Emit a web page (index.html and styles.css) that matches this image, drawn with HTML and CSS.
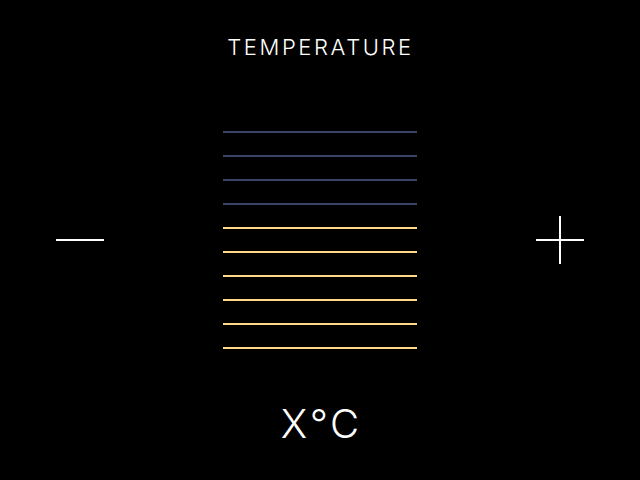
FILE: index.html
```html
<!DOCTYPE html>
<html lang="en">
<head>
  <meta charset="UTF-8" />
  <title>Temperature</title>
  <link rel="stylesheet" href="styles.css">
</head>
<body>
<div class="screen">
  <h1 class="title">TEMPERATURE</h1>

  <div class="control">
    <button class="step" aria-label="Decrease">
      <svg width="48" height="48" viewBox="0 0 48 48"><rect x="0" y="23" width="48" height="2" fill="#fff"/></svg>
    </button>

    <div class="levels">
      <span class="level off"></span>
      <span class="level off"></span>
      <span class="level off"></span>
      <span class="level off"></span>
      <span class="level on"></span>
      <span class="level on"></span>
      <span class="level on"></span>
      <span class="level on"></span>
      <span class="level on"></span>
      <span class="level on"></span>
    </div>

    <button class="step" aria-label="Increase">
      <svg width="48" height="48" viewBox="0 0 48 48"><rect x="0" y="23" width="48" height="2" fill="#fff"/><rect x="23" y="0" width="2" height="48" fill="#fff"/></svg>
    </button>
  </div>

  <div class="value">X°C</div>
</div>
</body>
</html>
```

FILE: styles.css
```css
html, body {
  margin: 0;
  background: #000;
}
.screen {
  width: 640px;
  height: 480px;
  display: flex;
  flex-direction: column;
  align-items: center;
  font-family: Inter, "Noto Sans", sans-serif;
  color: #fff;
}
.title {
  margin: 0;
  padding-top: 34px;
  padding-left: 1px;
  font-size: 22px;
  line-height: 26px;
  font-weight: 300;
  letter-spacing: 2.6px;
}
.control {
  align-self: stretch;
  display: flex;
  justify-content: space-between;
  align-items: center;
  padding: 0 56px;
  margin-top: 71px;
}
.step {
  background: none;
  border: none;
  padding: 0;
  width: 48px;
  height: 48px;
  display: block;
}
.step svg {
  display: block;
}
.levels {
  width: 194px;
  display: flex;
  flex-direction: column;
  gap: 22px;
}
.level {
  display: block;
  height: 2px;
}
.level.off {
  background: #3a4566;
}
.level.on {
  background: #ffd88a;
}
.value {
  margin-top: 51px;
  padding-left: 2.5px;
  font-size: 40px;
  line-height: 48px;
  font-weight: 300;
  letter-spacing: 2.5px;
}
```
